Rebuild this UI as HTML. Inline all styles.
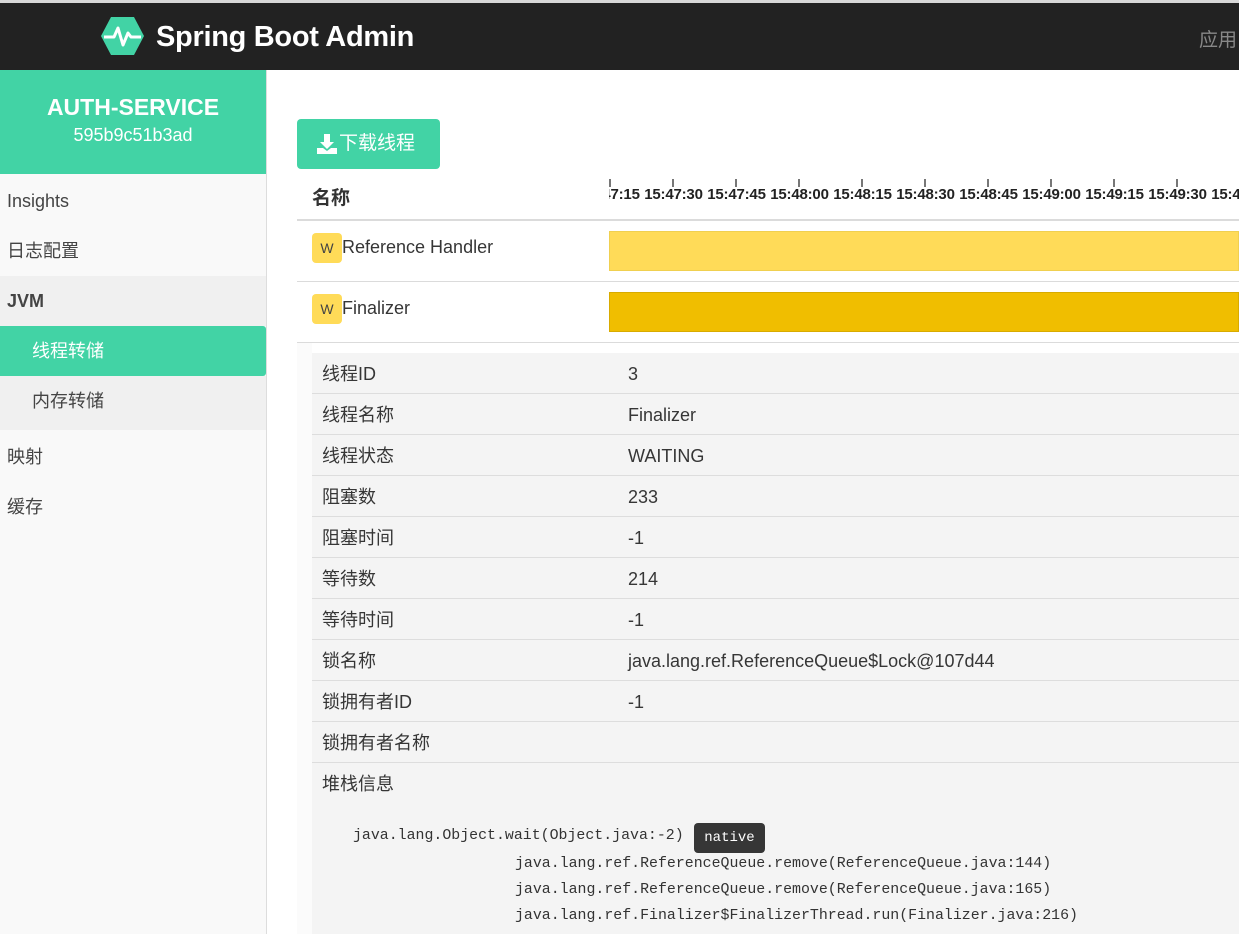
<!DOCTYPE html>
<html><head><meta charset="utf-8"><style>
*{box-sizing:border-box;margin:0;padding:0}
body{width:1239px;height:934px;overflow:hidden;background:#fff;font-family:"Liberation Sans","Noto Sans CJK SC",sans-serif;color:#363636;position:relative}
.top{position:absolute;left:0;top:0;width:1239px;height:3px;background:#d8d8d8}
.hdr{position:absolute;left:0;top:3px;width:1239px;height:67px;background:#222}
.hdr .t{position:absolute;left:156px;top:18px;font-size:29px;color:#fff;font-weight:bold;letter-spacing:-0.3px}
.hdr .r{position:absolute;left:1199px;top:22px;font-size:19px;color:#888}
.side{position:absolute;left:0;top:70px;width:267px;height:864px;background:#f9f9f9;border-right:1px solid #ddd}
.sh{height:104px;background:#42d3a5;color:#fff;text-align:center}
.sh .a{padding-top:24px;font-size:23px;font-weight:bold}
.sh .b{font-size:18px;margin-top:4px}
.it{height:50px;line-height:50px;font-size:18px;padding-left:7px;color:#444}
.sub{padding-left:32px}
.g{background:#f0f0f0}
.act{background:#42d3a5;color:#fff;border-radius:0 3px 3px 0}
.btn{position:absolute;left:297px;top:119px;width:143px;height:50px;background:#42d3a5;border-radius:4px;color:#fff;font-size:19px;line-height:50px;padding-left:42px}
.abs{position:absolute}
.w{position:absolute;width:30px;height:30px;background:#ffdb58;border-radius:4px;font-size:14px;line-height:30px;text-align:center;color:#444}
.tick{position:absolute;width:2px;height:8px;background:#777}
.lbl{position:absolute;width:63px;text-align:center;font-size:15px;font-weight:bold;color:#222;white-space:nowrap;letter-spacing:-0.2px}
.row{position:absolute;left:312px;width:927px;height:41px;border-bottom:1px solid #ddd;font-size:18px;line-height:42px;background:#f4f4f4}
.row span{position:absolute;left:10px}
.row b{position:absolute;left:316px;font-weight:normal}
.mono{position:absolute;font-family:"Liberation Mono","Noto Sans CJK SC",monospace;font-size:14.9px;color:#333}
</style></head><body>
<div class="top"></div>
<div class="hdr">
<svg class="abs" style="left:101px;top:14px" width="43" height="38" viewBox="0 0 43 38"><polygon points="10,0 33,0 43,19 33,38 10,38 0,19" fill="#42d3a5"/><polyline points="3,20 13,20 17,11 22,28 27,16 30,20 40,20" fill="none" stroke="#fff" stroke-width="3" stroke-linejoin="round"/></svg>
<div class="t">Spring Boot Admin</div><div class="r">应用</div></div>
<div class="side">
<div class="sh"><div class="a">AUTH-SERVICE</div><div class="b">595b9c51b3ad</div></div>
<div class="it" style="margin-top:2px">Insights</div>
<div class="it">日志配置</div>
<div class="it g" style="font-weight:bold">JVM</div>
<div class="it sub act">线程转储</div>
<div class="it sub g" style="height:54px">内存转储</div>
<div class="it" style="margin-top:2px">映射</div>
<div class="it">缓存</div>
</div>
<div class="btn"><svg class="abs" style="left:20px;top:15px" width="20" height="20" viewBox="0 0 20 20"><path d="M7 0h6v8h4l-7 7-7-7h4z M0 14h6l4 3 4-3h6v6H0z" fill="#fff"/></svg>下载线程</div>
<div class="abs" style="left:312px;top:183px;font-size:19px;font-weight:bold;color:#333">名称</div>
<div class="abs" style="left:609px;top:176px;width:630px;height:34px;overflow:hidden">
<div style="position:relative;left:-609px">
<div class="tick" style="left:609px;top:3px"></div><div class="tick" style="left:672px;top:3px"></div><div class="tick" style="left:735px;top:3px"></div><div class="tick" style="left:798px;top:3px"></div><div class="tick" style="left:861px;top:3px"></div><div class="tick" style="left:924px;top:3px"></div><div class="tick" style="left:987px;top:3px"></div><div class="tick" style="left:1050px;top:3px"></div><div class="tick" style="left:1113px;top:3px"></div><div class="tick" style="left:1176px;top:3px"></div><div class="tick" style="left:1239px;top:3px"></div>
<div class="lbl" style="left:579px;top:10px">15:47:15</div><div class="lbl" style="left:642px;top:10px">15:47:30</div><div class="lbl" style="left:705px;top:10px">15:47:45</div><div class="lbl" style="left:768px;top:10px">15:48:00</div><div class="lbl" style="left:831px;top:10px">15:48:15</div><div class="lbl" style="left:894px;top:10px">15:48:30</div><div class="lbl" style="left:957px;top:10px">15:48:45</div><div class="lbl" style="left:1020px;top:10px">15:49:00</div><div class="lbl" style="left:1083px;top:10px">15:49:15</div><div class="lbl" style="left:1146px;top:10px">15:49:30</div><div class="lbl" style="left:1209px;top:10px">15:49:45</div>
</div></div>
<div class="abs" style="left:297px;top:219px;width:942px;height:2px;background:#dbdbdb"></div>
<div class="w" style="left:312px;top:233px">W</div><div class="abs" style="left:342px;top:237px;font-size:18px">Reference Handler</div>
<div class="abs" style="left:609px;top:231px;width:630px;height:40px;background:#ffdb58;border:1px solid #f0d050"></div>
<div class="abs" style="left:297px;top:281px;width:942px;height:1px;background:#dbdbdb"></div>
<div class="w" style="left:312px;top:294px">W</div><div class="abs" style="left:342px;top:298px;font-size:18px">Finalizer</div>
<div class="abs" style="left:609px;top:292px;width:630px;height:40px;background:#f0be00;border:1px solid #d8ab00"></div>
<div class="abs" style="left:297px;top:342px;width:942px;height:1px;background:#dbdbdb"></div>
<div class="abs" style="left:297px;top:343px;width:15px;height:591px;background:#fbfbfb"></div>
<div class="row" style="top:353px"><span>线程ID</span><b>3</b></div>
<div class="row" style="top:394px"><span>线程名称</span><b>Finalizer</b></div>
<div class="row" style="top:435px"><span>线程状态</span><b>WAITING</b></div>
<div class="row" style="top:476px"><span>阻塞数</span><b>233</b></div>
<div class="row" style="top:517px"><span>阻塞时间</span><b>-1</b></div>
<div class="row" style="top:558px"><span>等待数</span><b>214</b></div>
<div class="row" style="top:599px"><span>等待时间</span><b>-1</b></div>
<div class="row" style="top:640px"><span>锁名称</span><b>java.lang.ref.ReferenceQueue$Lock@107d44</b></div>
<div class="row" style="top:681px"><span>锁拥有者ID</span><b>-1</b></div>
<div class="row" style="top:722px"><span>锁拥有者名称</span><b></b></div>
<div class="row" style="top:763px;height:171px;border:none"><span>堆栈信息</span></div>
<div class="mono" style="left:353px;top:828px">java.lang.Object.wait(Object.java:-2)</div>
<div class="abs" style="left:694px;top:823px;width:71px;height:30px;background:#363636;border-radius:4px;color:#fff;font-family:'Liberation Mono',monospace;font-size:14px;line-height:30px;text-align:center">native</div>
<div class="mono" style="left:515px;top:856px">java.lang.ref.ReferenceQueue.remove(ReferenceQueue.java:144)</div>
<div class="mono" style="left:515px;top:882px">java.lang.ref.ReferenceQueue.remove(ReferenceQueue.java:165)</div>
<div class="mono" style="left:515px;top:908px">java.lang.ref.Finalizer$FinalizerThread.run(Finalizer.java:216)</div>
</body></html>
